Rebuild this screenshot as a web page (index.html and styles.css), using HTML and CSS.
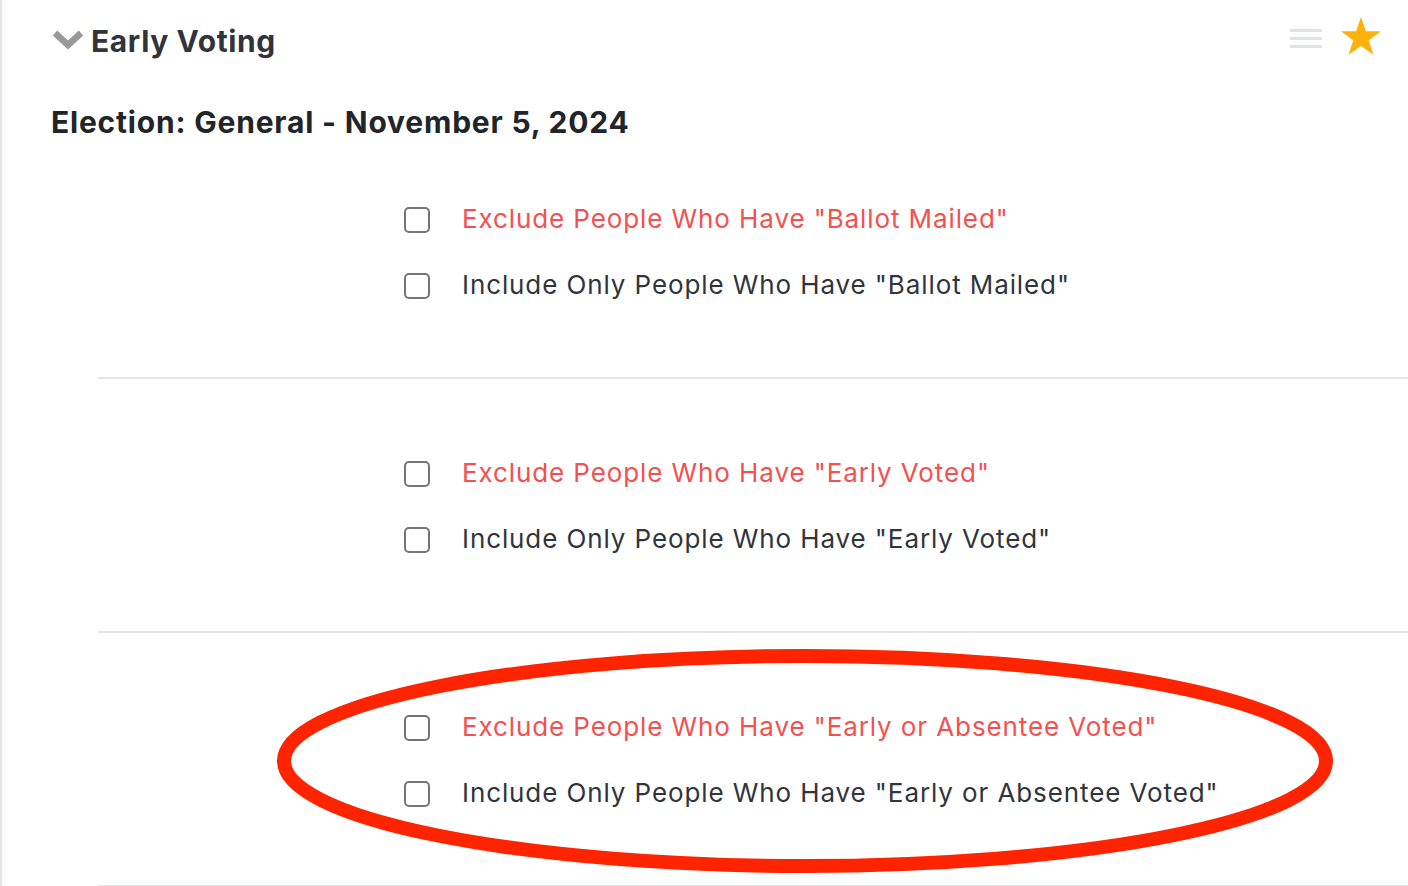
FILE: index.html
```html
<!DOCTYPE html>
<html>
<head>
<meta charset="utf-8">
<link rel="stylesheet" href="styles.css">
</head>
<body>
<div class="panel">
  <div class="card-header">
    <div class="title">
      <svg class="chevron" width="32" height="22" viewBox="0 0 32 22"><path d="M3 4 L16 16 L29 4" fill="none" stroke="#999999" stroke-width="6.5" stroke-linejoin="miter"/></svg>
      <span>Early Voting</span>
    </div>
    <div class="tools">
      <svg class="menu" width="32" height="20" viewBox="0 0 32 20"><rect x="0" y="0" width="32" height="3" fill="#dee1e5"/><rect x="0" y="8" width="32" height="3" fill="#dee1e5"/><rect x="0" y="16" width="32" height="3" fill="#dee1e5"/></svg>
      <svg class="star" width="42" height="40" viewBox="0 0 42 40"><polygon points="21,1 25.9,15.3 41,15.3 28.8,24.3 33.4,38.8 21,29.9 8.6,38.8 13.2,24.3 1,15.3 16.1,15.3" fill="#fdb10b"/></svg>
    </div>
  </div>
  <h2 class="election">Election: General - November 5, 2024</h2>
  <div class="sections">
    <div class="section first">
      <label class="row"><span class="box"></span><span class="exclude">Exclude People Who Have "Ballot Mailed"</span></label>
      <label class="row"><span class="box"></span><span class="include">Include Only People Who Have "Ballot Mailed"</span></label>
    </div>
    <div class="section">
      <label class="row"><span class="box"></span><span class="exclude">Exclude People Who Have "Early Voted"</span></label>
      <label class="row"><span class="box"></span><span class="include">Include Only People Who Have "Early Voted"</span></label>
    </div>
    <div class="section">
      <label class="row"><span class="box"></span><span class="exclude">Exclude People Who Have "Early or Absentee Voted"</span></label>
      <label class="row"><span class="box"></span><span class="include">Include Only People Who Have "Early or Absentee Voted"</span></label>
    </div>
  </div>
  <svg class="annotation" width="1408" height="886" viewBox="0 0 1408 886"><ellipse cx="805" cy="761" rx="521" ry="105" fill="none" stroke="#ff2400" stroke-width="14"/></svg>
</div>
</body>
</html>
```
FILE: styles.css
```css
html, body {
  margin: 0;
  padding: 0;
  background: #ffffff;
}
body {
  font-family: Inter, Roboto, "Liberation Sans", sans-serif;
  width: 1408px;
  height: 886px;
  overflow: hidden;
}
.panel {
  position: relative;
  height: 886px;
  border-left: 2px solid #e1e4e8;
  box-sizing: border-box;
}
.card-header {
  height: 80px;
  display: flex;
  align-items: center;
  justify-content: space-between;
  padding-left: 50px;
  padding-right: 26px;
}
.title {
  display: flex;
  align-items: center;
  gap: 7px;
  font-size: 30px;
  font-weight: 700;
  letter-spacing: 0.6px;
  color: #30353b;
  margin-top: 2px;
}
.chevron {
  display: block;
  margin-top: -2px;
}
.tools {
  display: flex;
  align-items: center;
  gap: 18px;
  margin-top: -9px;
}
.menu {
  display: block;
  margin-top: 7px;
}
.star {
  display: block;
}
.election {
  margin: 0;
  padding-left: 49px;
  font-size: 30px;
  font-weight: 700;
  letter-spacing: 0.8px;
  color: #212529;
  line-height: 40px;
  margin-top: 22px;
}
.sections {
  margin-left: 96px;
}
.section {
  padding: 62px 0 58px 306px;
  border-bottom: 2px solid #e1e4e8;
}
.section.first {
  padding-top: 45px;
}
.row {
  height: 66px;
  display: flex;
  align-items: center;
  font-size: 26px;
  letter-spacing: 0.9px;
}
.box {
  width: 22px;
  height: 22px;
  border: 2px solid #757575;
  border-radius: 5px;
  margin-right: 32px;
  flex: none;
}
.exclude, .include {
  margin-top: -3px;
}
.exclude {
  color: #f55050;
}
.include {
  color: #30353b;
}
.annotation {
  position: absolute;
  left: -2px;
  top: 0;
  pointer-events: none;
}
```
